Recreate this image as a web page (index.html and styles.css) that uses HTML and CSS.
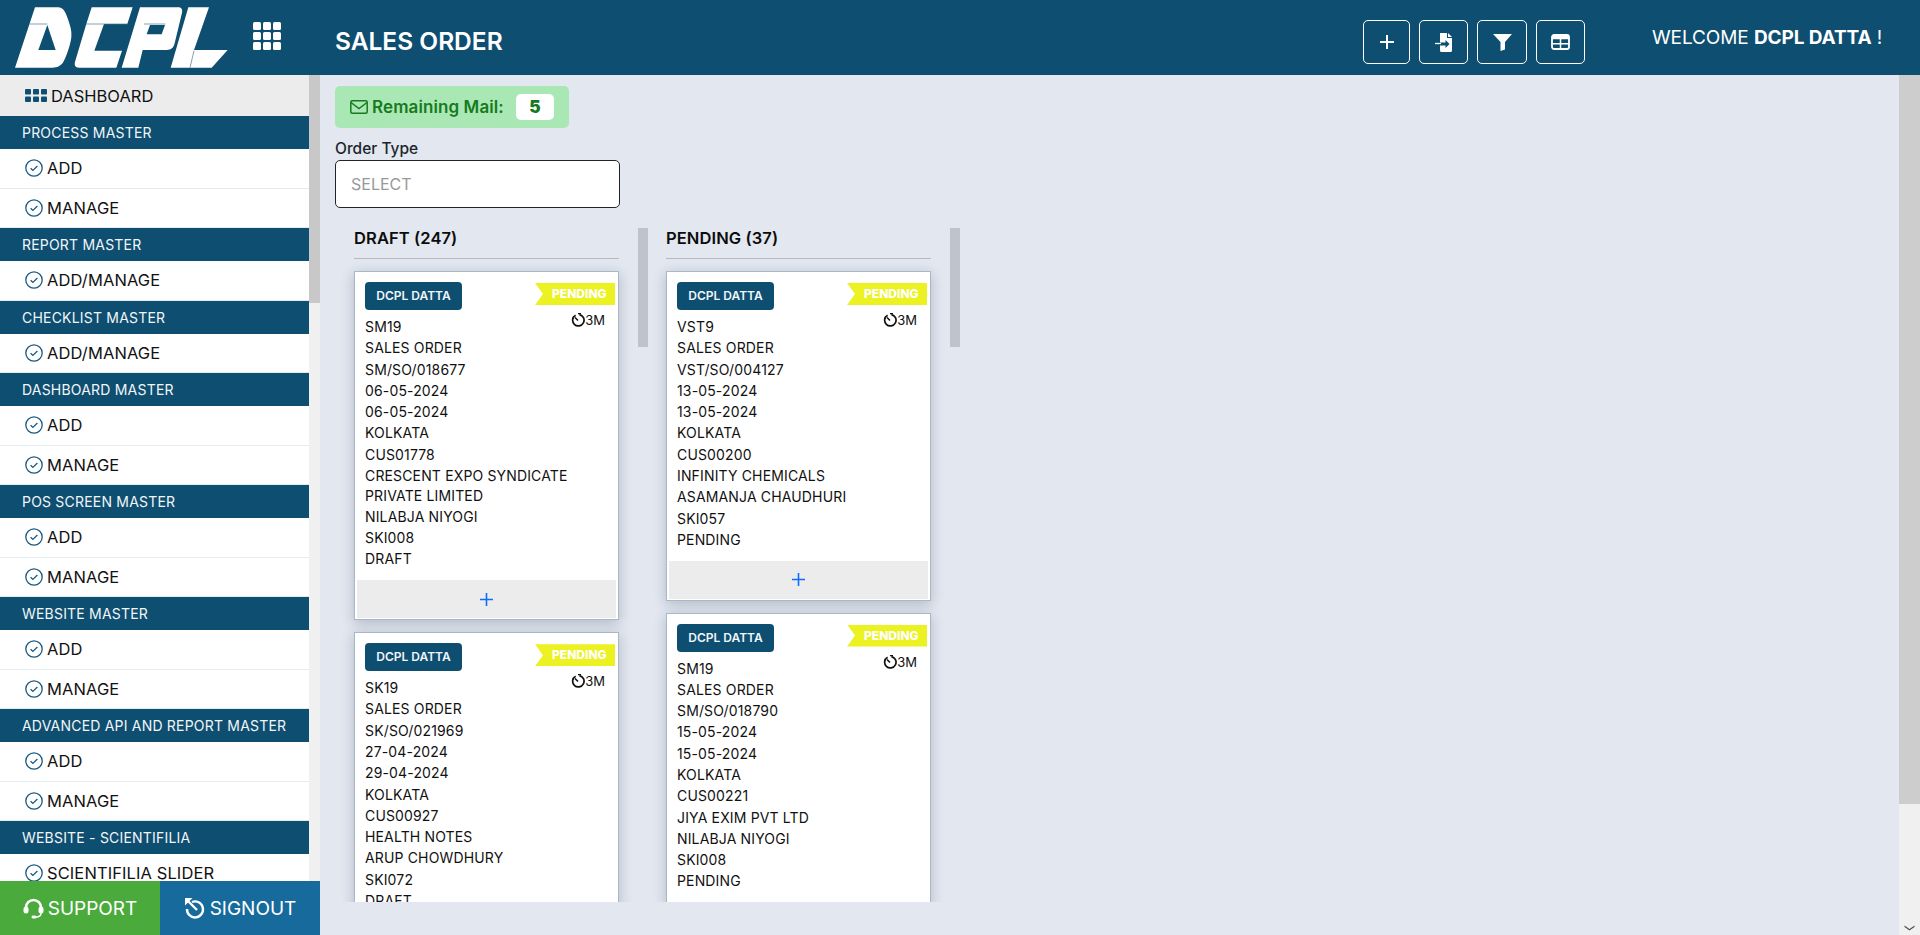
FILE: index.html
```html
<!DOCTYPE html>
<html lang="en">
<head>
<meta charset="utf-8">
<title>Sales Order</title>
<link rel="stylesheet" href="styles.css">
</head>
<body>
<svg class="defs" width="0" height="0" aria-hidden="true">
  <symbol id="chk" viewBox="0 0 18 18"><circle cx="9" cy="9" r="8.2" fill="none" stroke="currentColor" stroke-width="1.3"/><path d="M5.600 9.200l2.300 2.200 4.500-4.400" fill="none" stroke="currentColor" stroke-width="1.300"/></symbol>
  <symbol id="tmr" viewBox="0 0 14 14"><path d="M4.600 2.200A5.700 5.700 0 1 0 8.400 1.600" fill="none" stroke="#111" stroke-width="1.700"/><path d="M7 0.500h3M7 7.500L4 4.400" stroke="#111" stroke-width="1.500" fill="none"/></symbol>
</svg>
<header class="topbar">
  <svg class="logo" viewBox="0 0 720 225" aria-label="DCPL">
    <path fill="#fff" fill-rule="evenodd" d="M105 22H176C192 24 198 40 204 58C210 76 216 92 214 112C212 132 200 168 190 186C182 198 172 203 158 203H45ZM142 75L115 150H167Z"/>
    <path fill="#fff" d="M275 22H398L382 72H312L283 152H366L349 203H238C224 203 222 194 226 182L258 75Z"/>
    <path fill="#fff" fill-rule="evenodd" d="M420 22H538C546 24 548 30 546 38L524 130C520 144 514 150 500 150H428L415 203H365ZM450 75L440 103H485L495 75Z"/>
    <path fill="#fff" d="M565 22H627L582 150H683L635 203H512Z"/>
    <path d="M88 72H142M258 72H384M432 72H496M582 152L570 203" stroke="#3f7290" stroke-width="2" fill="none"/>
  </svg>
  <svg class="apps" viewBox="0 0 28 28" aria-hidden="true"><g fill="#fff"><rect width="8" height="8" rx="1.500"/><rect x="10" width="8" height="8" rx="1.500"/><rect x="20" width="8" height="8" rx="1.500"/><rect y="10" width="8" height="8" rx="1.500"/><rect x="10" y="10" width="8" height="8" rx="1.500"/><rect x="20" y="10" width="8" height="8" rx="1.500"/><rect y="20" width="8" height="8" rx="1.500"/><rect x="10" y="20" width="8" height="8" rx="1.500"/><rect x="20" y="20" width="8" height="8" rx="1.500"/></g></svg>
  <h1 class="title">SALES ORDER</h1>
  <div class="tools">
    <button class="tool t47"><svg width="16" height="16" viewBox="0 0 16 16"><path d="M8 1v14M1 8h14" stroke="#fff" stroke-width="2"/></svg></button>
    <button class="tool t49"><svg width="18" height="19" viewBox="0 0 18 19"><path fill="#fff" d="M5 0h7v5h5v12.500a1.500 1.500 0 0 1-1.500 1.500h-9A1.500 1.500 0 0 1 5 17.500V12.500h5.500v2.500l4-4-4-4v2.500H5ZM13 0l4 4h-4Z"/><path d="M0 10.500h6" stroke="#fff" stroke-width="1.300"/></svg></button>
    <button class="tool t50"><svg width="19" height="17" viewBox="0 0 19 17"><path fill="#fff" d="M0 0h19l-7 8v7.500L7.500 17V8Z"/></svg></button>
    <button class="tool t49"><svg width="19" height="16" viewBox="0 0 19 16"><rect x="1" y="1" width="17" height="14" rx="2" fill="none" stroke="#fff" stroke-width="1.800"/><path d="M1 3.500h17" stroke="#fff" stroke-width="3.500"/><path d="M1 9.700h17M9.500 5v10" stroke="#fff" stroke-width="1.500"/></svg></button>
  </div>
  <div class="welcome">WELCOME <b>DCPL DATTA</b> !</div>
</header>
<div class="shell">
  <aside class="sidebar">
    <div class="side-top">
      <nav class="nav">
        <a class="dash"><svg width="22" height="13" viewBox="0 0 22 13" aria-hidden="true"><g fill="#0e4e70"><rect width="6" height="5.500" rx="1"/><rect x="8" width="6" height="5.500" rx="1"/><rect x="16" width="6" height="5.500" rx="1"/><rect y="7.500" width="6" height="5.500" rx="1"/><rect x="8" y="7.500" width="6" height="5.500" rx="1"/><rect x="16" y="7.500" width="6" height="5.500" rx="1"/></g></svg>DASHBOARD</a>
        <div class="sec">PROCESS MASTER</div>
        <a class="item"><svg class="chk"><use href="#chk"/></svg>ADD</a>
        <a class="item"><svg class="chk"><use href="#chk"/></svg>MANAGE</a>
        <div class="sec">REPORT MASTER</div>
        <a class="item"><svg class="chk"><use href="#chk"/></svg>ADD/MANAGE</a>
        <div class="sec">CHECKLIST MASTER</div>
        <a class="item"><svg class="chk"><use href="#chk"/></svg>ADD/MANAGE</a>
        <div class="sec">DASHBOARD MASTER</div>
        <a class="item"><svg class="chk"><use href="#chk"/></svg>ADD</a>
        <a class="item"><svg class="chk"><use href="#chk"/></svg>MANAGE</a>
        <div class="sec">POS SCREEN MASTER</div>
        <a class="item"><svg class="chk"><use href="#chk"/></svg>ADD</a>
        <a class="item"><svg class="chk"><use href="#chk"/></svg>MANAGE</a>
        <div class="sec">WEBSITE MASTER</div>
        <a class="item"><svg class="chk"><use href="#chk"/></svg>ADD</a>
        <a class="item"><svg class="chk"><use href="#chk"/></svg>MANAGE</a>
        <div class="sec">ADVANCED API AND REPORT MASTER</div>
        <a class="item"><svg class="chk"><use href="#chk"/></svg>ADD</a>
        <a class="item"><svg class="chk"><use href="#chk"/></svg>MANAGE</a>
        <div class="sec">WEBSITE - SCIENTIFILIA</div>
        <a class="item"><svg class="chk"><use href="#chk"/></svg>SCIENTIFILIA SLIDER</a>
      </nav>
      <div class="side-track"><div class="side-thumb"></div></div>
    </div>
    <div class="side-foot">
      <a class="foot support"><svg width="21" height="21" viewBox="0 0 21 21" aria-hidden="true"><path d="M3 11V9.500a7.500 7.500 0 0 1 15 0V11" fill="none" stroke="#fff" stroke-width="2.600"/><rect x="0.500" y="8.500" width="5" height="7" rx="2.500" fill="#fff"/><rect x="15.500" y="8.500" width="5" height="7" rx="2.500" fill="#fff"/><path d="M18 15c0 3-2 4-5 4" fill="none" stroke="#fff" stroke-width="1.600"/><rect x="8.500" y="17.500" width="5" height="3" rx="1.500" fill="#fff"/></svg>SUPPORT</a>
      <a class="foot signout"><svg width="22" height="22" viewBox="0 0 22 22" aria-hidden="true"><path d="M8 5a8 8 0 1 1-5 7" fill="none" stroke="#fff" stroke-width="2.400"/><path d="M3 3l10 10" stroke="#fff" stroke-width="2.400"/><path d="M1 1h7.500L1 8.500Z" fill="#fff"/></svg>SIGNOUT</a>
    </div>
  </aside>
  <main class="main">
    <div class="mail"><svg width="18" height="14" viewBox="0 0 18 14" aria-hidden="true"><rect x="0.800" y="0.800" width="16.400" height="12.400" rx="1.500" fill="none" stroke="#177a1e" stroke-width="1.500"/><path d="M1 2.500l8 6 8-6" fill="none" stroke="#177a1e" stroke-width="1.500"/></svg><span class="mail-label">Remaining Mail:</span><span class="mail-count">5</span></div>
    <div class="field-label">Order Type</div>
    <div class="select">SELECT</div>
    <div class="board">
      <section class="column">
        <h2 class="col-title">DRAFT (247)</h2>
        <article class="card">
          <span class="owner">DCPL DATTA</span><span class="ribbon">PENDING</span>
          <span class="age"><svg width="14" height="14"><use href="#tmr"/></svg>3M</span>
          <div class="rows"><p>SM19</p><p>SALES ORDER</p><p>SM/SO/018677</p><p>06-05-2024</p><p>06-05-2024</p><p>KOLKATA</p><p>CUS01778</p><p>CRESCENT EXPO SYNDICATE PRIVATE LIMITED</p><p>NILABJA NIYOGI</p><p>SKI008</p><p>DRAFT</p></div>
          <div class="add"><svg width="13" height="13" viewBox="0 0 13 13"><path d="M6.500 0v13M0 6.500h13" stroke="#0d6efd" stroke-width="1.600"/></svg></div>
        </article>
        <article class="card">
          <span class="owner">DCPL DATTA</span><span class="ribbon">PENDING</span>
          <span class="age"><svg width="14" height="14"><use href="#tmr"/></svg>3M</span>
          <div class="rows"><p>SK19</p><p>SALES ORDER</p><p>SK/SO/021969</p><p>27-04-2024</p><p>29-04-2024</p><p>KOLKATA</p><p>CUS00927</p><p>HEALTH NOTES</p><p>ARUP CHOWDHURY</p><p>SKI072</p><p>DRAFT</p></div>
        </article>
      </section>
      <div class="col-track"></div>
      <section class="column">
        <h2 class="col-title">PENDING (37)</h2>
        <article class="card">
          <span class="owner">DCPL DATTA</span><span class="ribbon">PENDING</span>
          <span class="age"><svg width="14" height="14"><use href="#tmr"/></svg>3M</span>
          <div class="rows"><p>VST9</p><p>SALES ORDER</p><p>VST/SO/004127</p><p>13-05-2024</p><p>13-05-2024</p><p>KOLKATA</p><p>CUS00200</p><p>INFINITY CHEMICALS</p><p>ASAMANJA CHAUDHURI</p><p>SKI057</p><p>PENDING</p></div>
          <div class="add"><svg width="13" height="13" viewBox="0 0 13 13"><path d="M6.500 0v13M0 6.500h13" stroke="#0d6efd" stroke-width="1.600"/></svg></div>
        </article>
        <article class="card">
          <span class="owner">DCPL DATTA</span><span class="ribbon">PENDING</span>
          <span class="age"><svg width="14" height="14"><use href="#tmr"/></svg>3M</span>
          <div class="rows"><p>SM19</p><p>SALES ORDER</p><p>SM/SO/018790</p><p>15-05-2024</p><p>15-05-2024</p><p>KOLKATA</p><p>CUS00221</p><p>JIYA EXIM PVT LTD</p><p>NILABJA NIYOGI</p><p>SKI008</p><p>PENDING</p></div>
        </article>
      </section>
      <div class="col-track"></div>
    </div>
  </main>
  <div class="page-track"><div class="page-thumb"></div><svg class="chev" width="11" height="6" viewBox="0 0 11 6" aria-hidden="true"><path d="M0.500 0.500l5 3.500 5-3.500v1.500l-5 3.500-5-3.500Z" fill="#505050"/></svg></div>
</div>
</body>
</html>
```
FILE: styles.css
```css
* { box-sizing: border-box; }
html, body { margin: 0; height: 100%; }
body {
  height: 935px;
  overflow: hidden;
  display: flex;
  flex-direction: column;
  background: #e2e7f0;
  color: #111;
  font-family: Inter, "Noto Sans", "Liberation Sans", sans-serif;
}
.defs { position: absolute; }

.topbar {
  flex: 0 0 75px;
  height: 75px;
  display: flex;
  align-items: center;
  background: #0e4e70;
  color: #fff;
}
.logo { width: 240px; height: 75px; flex: none; }
.apps { width: 28px; height: 28px; margin: 0 0 3px 13px; flex: none; }
.title { margin: 7px 0 0 54px; font-size: 24.500px; font-weight: 600; white-space: nowrap; }
.tools { display: flex; gap: 9px; margin: 9px 0 0 auto; }
.tool {
  display: flex;
  align-items: center;
  justify-content: center;
  height: 44px;
  padding: 0;
  background: transparent;
  border: 1px solid #fff;
  border-radius: 5px;
}
.t47 { width: 47px; }
.t49 { width: 49px; }
.t50 { width: 50px; }
.welcome { width: 335px; padding: 0 0 1px 67px; font-size: 19px; white-space: nowrap; letter-spacing: -0.1px; }
.welcome b { font-weight: 700; }

.shell { flex: 1; min-height: 0; display: flex; }

.sidebar { flex: 0 0 320px; display: flex; flex-direction: column; background: #fff; }
.side-top { flex: 1; min-height: 0; display: flex; overflow: hidden; }
.nav { flex: 0 0 309px; }
.dash {
  display: flex;
  align-items: center;
  gap: 4px;
  height: 41px;
  padding-left: 25px;
  background: #ececec;
  font-size: 16.500px;
}
.sec {
  display: flex;
  align-items: center;
  height: 33px;
  padding-left: 22px;
  background: #0e4e70;
  color: #f2f6fa;
  font-size: 14px;
  letter-spacing: 0.2px;
  white-space: nowrap;
}
.item {
  display: flex;
  align-items: center;
  gap: 4px;
  height: 39.500px;
  padding-left: 25px;
  background: #fff;
  border-bottom: 1px solid #e2ebf2;
  font-size: 16.500px;
  letter-spacing: 0.1px;
  white-space: nowrap;
}
.chk { width: 18px; height: 18px; color: #1a5a80; flex: none; }
.side-track { flex: 0 0 11px; background: #f0f0f0; }
.side-thumb { height: 228px; background: #c8c8c8; }
.side-foot { flex: 0 0 54px; display: flex; }
.foot {
  flex: 1;
  display: flex;
  align-items: center;
  justify-content: center;
  gap: 4px;
  color: #fff;
  font-size: 19px;
}
.support { background: #4aaa3c; }
.signout { background: #166b9c; }

.main { flex: 1; min-width: 0; display: flex; flex-direction: column; align-items: flex-start; padding: 11px 0 33px 15px; }
.mail {
  display: flex;
  align-items: center;
  height: 42px;
  width: 234px;
  padding-left: 15px;
  background: #a9e8b4;
  border-radius: 5px;
  color: #177a1e;
  font-size: 17px;
  font-weight: 600;
  white-space: nowrap;
}
.mail-label { margin-left: 4px; letter-spacing: 0.1px; }
.mail-count {
  display: flex;
  align-items: center;
  justify-content: center;
  width: 38px;
  height: 26px;
  margin-left: auto;
  margin-right: 15px;
  background: #fff;
  border-radius: 5px;
  font-weight: 900;
}
.field-label { margin-top: 10px; height: 22px; line-height: 22px; font-size: 15.500px; font-weight: 500; color: #212529; }
.select {
  display: flex;
  align-items: center;
  width: 285px;
  height: 48px;
  padding-left: 15px;
  background: #fff;
  border: 1px solid #212529;
  border-radius: 5px;
  color: #999;
  font-size: 16px;
}
.board { flex: 1; min-height: 0; display: flex; align-items: flex-start; margin-top: 20px; padding-left: 19px; overflow: hidden; width: 100%; }
.column { flex: 0 0 265px; }
.col-title {
  margin: 0 0 12px;
  height: 31px;
  font-size: 16.500px;
  line-height: 20px;
  font-weight: 600;
  letter-spacing: 0.1px;
  color: #0c0c0c;
  border-bottom: 1px solid #b5bac2;
}
.col-track { flex: 0 0 10px; height: 119px; margin: 0 18px 0 19px; background: #bfc4cc; }
.card {
  position: relative;
  margin-bottom: 12px;
  padding: 10px 2px 1px;
  background: #fff;
  border: 1px solid #a9b8c4;
  box-shadow: 0 3px 12px rgba(30, 50, 70, 0.25);
}
.owner {
  display: block;
  width: 97px;
  height: 28px;
  margin-left: 8px;
  background: #0e4e70;
  border-radius: 4px;
  color: #f2f6fa;
  font-size: 12px;
  font-weight: 600;
  line-height: 28px;
  text-align: center;
  white-space: nowrap;
}
.ribbon {
  position: absolute;
  top: 11px;
  right: 3px;
  width: 80px;
  height: 22px;
  padding-left: 17px;
  background: #ecf122;
  clip-path: polygon(0 0, 100% 0, 100% 100%, 0 100%, 8px 50%);
  color: #fff;
  font-size: 12px;
  font-weight: 800;
  line-height: 21px;
}
.age {
  position: absolute;
  top: 40px;
  right: 13px;
  display: flex;
  align-items: center;
  font-size: 13px;
}
.rows { padding: 7px 8px 9.500px; font-size: 14px; letter-spacing: 0.15px; }
.rows p { margin: 0 0 1.700px; line-height: 19.600px; }
.add { display: flex; align-items: center; justify-content: center; height: 38px; background: #ececec; }

.page-track { position: relative; flex: 0 0 21px; background: #f0f0f0; }
.page-thumb { height: 729px; background: #cdcdcd; }
.chev { position: absolute; right: 5px; bottom: 4px; }
```
